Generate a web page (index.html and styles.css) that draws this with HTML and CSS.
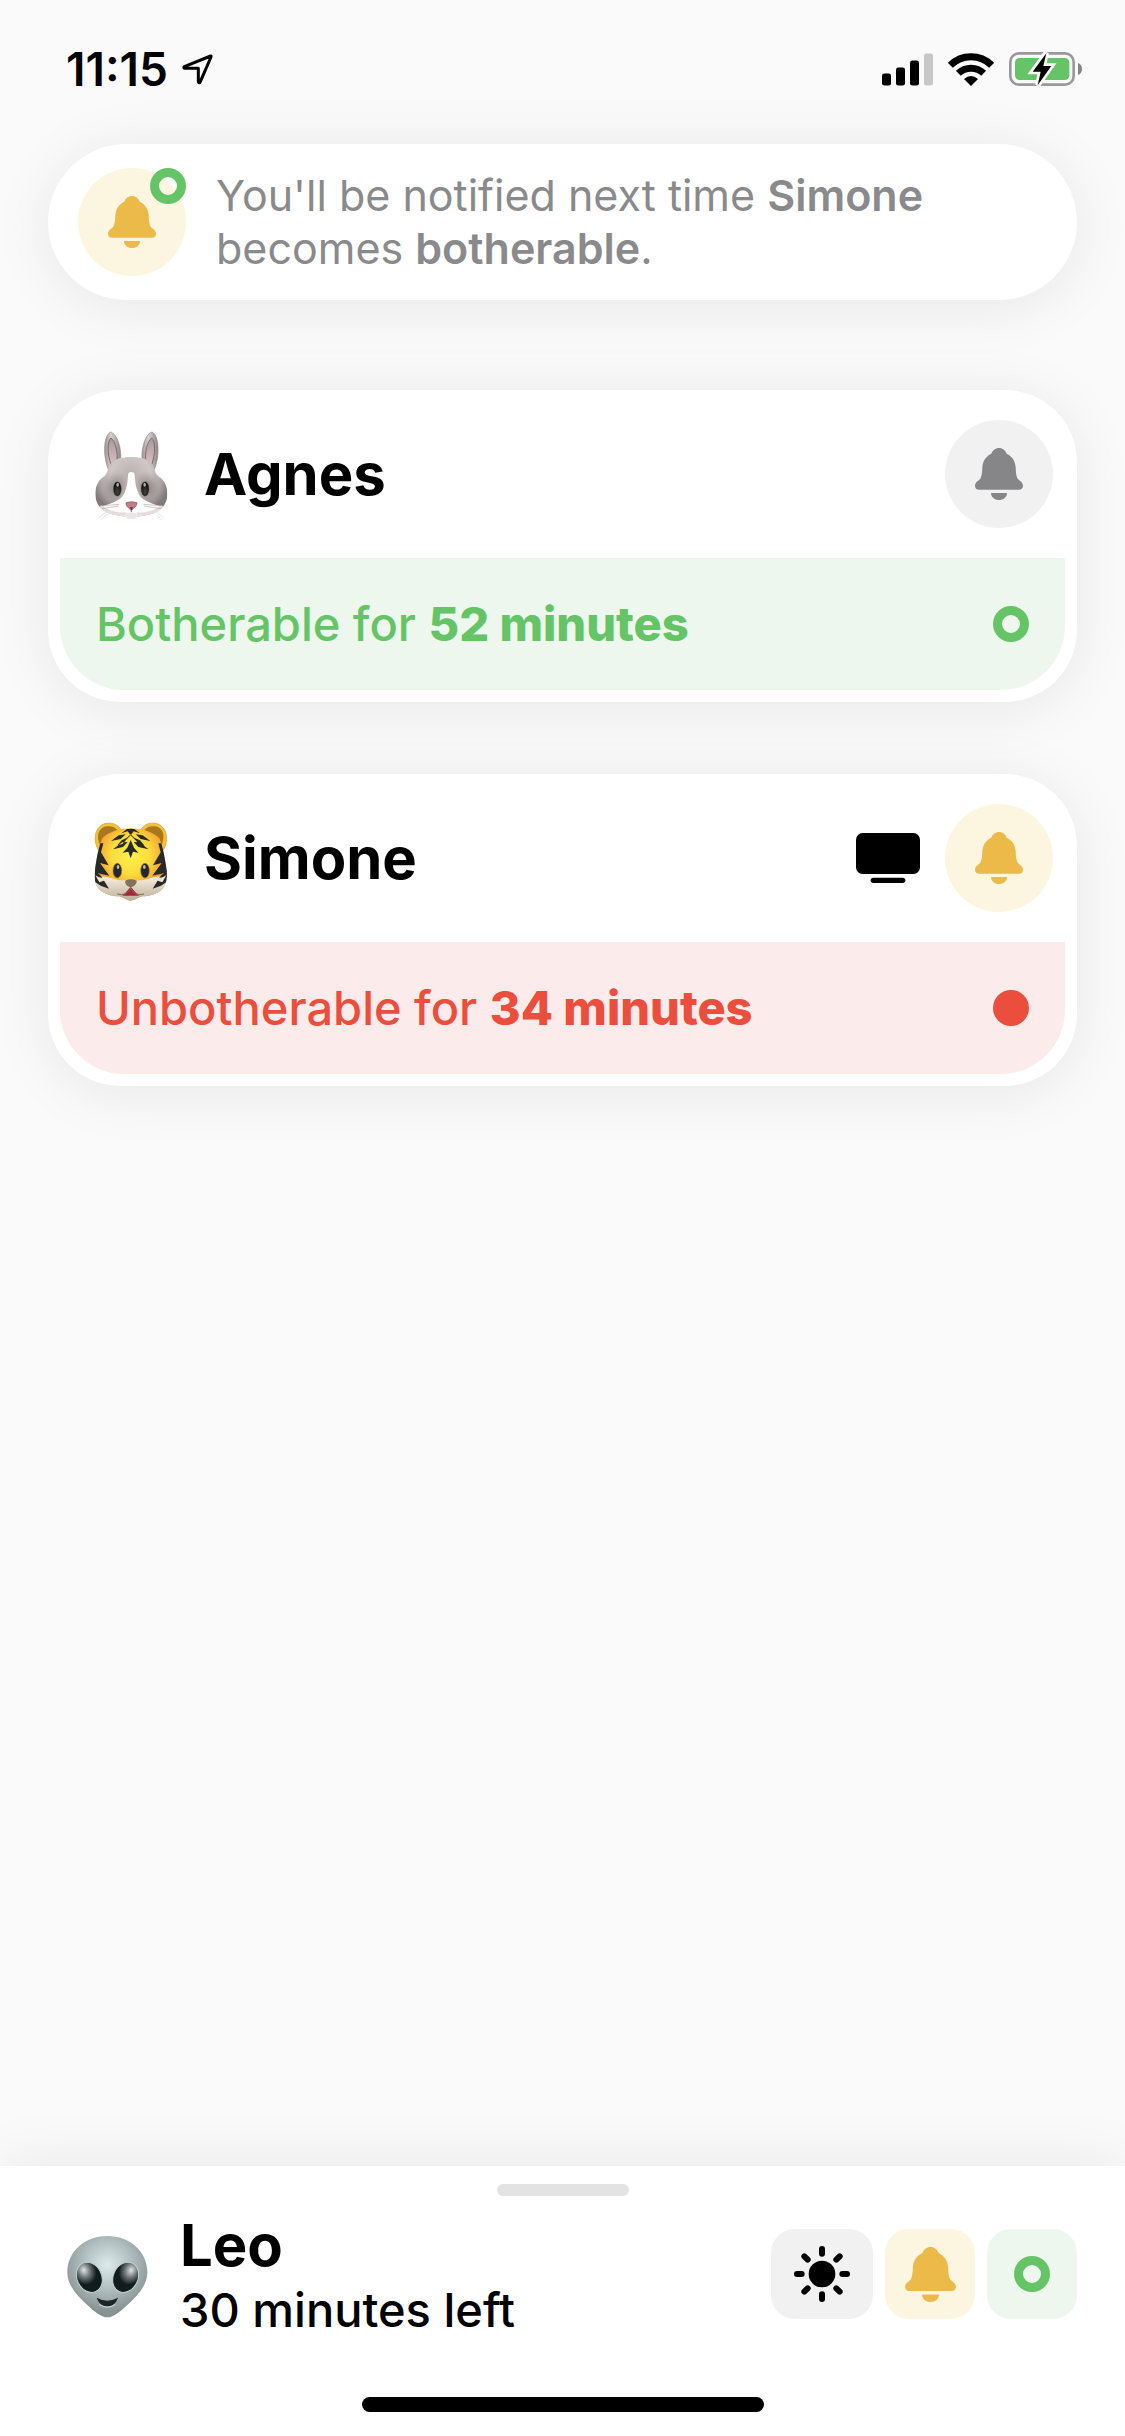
FILE: index.html
```html
<!DOCTYPE html>
<html lang="en">
<head>
<meta charset="utf-8">
<meta name="viewport" content="width=device-width, initial-scale=1">
<title>Botherable</title>
<link rel="stylesheet" href="styles.css">
</head>
<body>
<svg class="defs" width="0" height="0" aria-hidden="true">
  <symbol id="bell" viewBox="0 0 144 156">
    <path d="M72 0C83 0 91 7 95 17C112 25 121 40 122 58C123 75 123 82 128 92C134 98 144 103 144 113C144 121 139 125 132 125H12C5 125 0 121 0 113C0 103 10 98 16 92C21 82 21 75 22 58C23 40 32 25 49 17C53 7 61 0 72 0Z"/>
    <path d="M48 135H96C96 148 85 156 72 156S48 148 48 135Z"/>
  </symbol>
</svg>

<div class="screen">
  <header class="status-bar">
    <div class="status-left">
      <span class="time">11:15</span>
      <svg class="location" viewBox="429 69 93 93" width="31" height="31" aria-hidden="true"><path d="M515 75L436 107Q433 110 437 112L478 112L478 153Q480 157 483 154L516 78Q517 74 515 75Z" fill="none" stroke="#000" stroke-width="9" stroke-linejoin="round"/></svg>
    </div>
    <div class="status-right">
      <svg viewBox="66 68 153 98" width="51" height="33" aria-hidden="true">
        <rect x="66" y="129" width="27" height="36" rx="7"/>
        <rect x="108" y="111" width="27" height="54" rx="7"/>
        <rect x="150" y="90" width="27" height="75" rx="7"/>
        <rect x="192" y="69" width="27" height="96" rx="7" fill="#c7c7c7"/>
      </svg>
      <svg viewBox="264 66 138 99" width="46" height="33" aria-hidden="true">
        <path d="M271 103A88 88 0 0 1 395 103" fill="none" stroke="#000" stroke-width="21"/>
        <path d="M295 127A55 55 0 0 1 371 127" fill="none" stroke="#000" stroke-width="21"/>
        <path d="M333 165L312 144Q333 126 354 144Z"/>
      </svg>
      <svg viewBox="447 66 219 102" width="73" height="34" aria-hidden="true">
        <rect x="451" y="70" width="190" height="94" rx="26" fill="none" stroke="#999" stroke-width="8"/>
        <path d="M654 99Q666 104 666 117T654 135Z" fill="#858585"/>
        <rect x="465" y="84" width="163" height="66" rx="14" fill="#65c466"/>
        <path d="M559 68L518 125H542L533 166L574 108H550Z" stroke="#fafafa" stroke-width="16" fill="#fafafa"/>
        <path d="M559 70L518 125H542L533 166L574 108H550Z"/>
      </svg>
    </div>
  </header>

  <main class="content">
    <section class="toast" role="status">
      <div class="round-icon yellow">
        <svg class="bell" aria-hidden="true"><use href="#bell"/></svg>
        <span class="ring badge"></span>
      </div>
      <p class="toast-text">You'll be notified next time <b>Simone</b> becomes <b>botherable</b>.</p>
    </section>

    <article class="card">
      <div class="card-head">
        <svg class="avatar" viewBox="162 141 222 282" role="img" aria-label="Rabbit">
          <defs>
            <radialGradient id="fur" gradientUnits="userSpaceOnUse" cx="272" cy="285" r="120">
              <stop offset="0" stop-color="#b9afaf"/><stop offset=".5" stop-color="#d0c8c7"/><stop offset=".8" stop-color="#aaa2a2"/><stop offset="1" stop-color="#817979"/>
            </radialGradient>
            <radialGradient id="furshade"><stop offset="0" stop-color="#716868" stop-opacity=".8"/><stop offset="1" stop-color="#8a8181" stop-opacity="0"/></radialGradient>
            <linearGradient id="ear" x2="1"><stop offset="0" stop-color="#9b9392"/><stop offset=".4" stop-color="#d8d1ce"/><stop offset="1" stop-color="#8e8585"/></linearGradient>
            <linearGradient id="earin" x2="0" y2="1"><stop offset="0" stop-color="#a8999a"/><stop offset="1" stop-color="#dcbdc4"/></linearGradient>
            <radialGradient id="eye" cx=".5" cy=".7" r=".6"><stop offset="0" stop-color="#444"/><stop offset="1" stop-color="#0b0b0b"/></radialGradient>
            <clipPath id="rabbit-head"><path d="M205 260C216 238 244 231 274 231S331 238 342 260C344 278 350 285 362 294C376 305 382 323 382 342C382 377 356 400 325 404C306 407 294 411 274 412C254 411 242 407 223 404C192 400 166 377 166 342C166 323 172 305 186 294C198 285 203 278 205 260Z"/></clipPath>
          </defs>
          <path d="M205 268C190 235 188 170 211 156C231 160 247 205 241 249Z" fill="url(#ear)" stroke="#958c8b" stroke-width="2"/>
          <path d="M343 268C358 235 360 170 337 156C317 160 301 205 307 249Z" fill="url(#ear)" stroke="#958c8b" stroke-width="2"/>
          <path d="M213 254C201 220 202 182 213 174C226 182 235 220 230 247Z" fill="url(#earin)" stroke="#756b6c" stroke-width="3"/>
          <path d="M335 254C347 220 346 182 335 174C322 182 313 220 318 247Z" fill="url(#earin)" stroke="#756b6c" stroke-width="3"/>
          <g clip-path="url(#rabbit-head)">
            <rect x="160" y="225" width="230" height="190" fill="url(#fur)"/>
            <ellipse cx="228" cy="322" rx="42" ry="50" fill="url(#furshade)"/>
            <ellipse cx="320" cy="322" rx="42" ry="50" fill="url(#furshade)"/>
            <path d="M264 286Q264 276 274 276T284 286C285 320 294 348 310 358C335 374 360 378 378 382V415H170V382C188 378 213 374 238 358C254 348 263 320 264 286Z" fill="#fff"/>
            <path d="M180 378Q215 406 258 402M368 378Q333 406 290 402" stroke="#dccdcf" stroke-width="10" fill="none" opacity=".7"/>
            <path d="M190 377L238 373M185 386L236 378M359 377L310 373M364 386L312 378" stroke="#b6a8a9" stroke-width="2"/>
          </g>
          <path d="M198 396L176 414M204 400L182 420M350 396L371 414M344 400L366 420" stroke="#ddd8d8" stroke-width="2"/>
          <ellipse cx="232" cy="327" rx="12" ry="22" fill="url(#eye)" stroke="#776e6e"/>
          <ellipse cx="315" cy="327" rx="12" ry="22" fill="url(#eye)" stroke="#776e6e"/>
          <ellipse cx="233" cy="314" rx="4" ry="6" fill="#aaa"/><ellipse cx="314" cy="314" rx="4" ry="6" fill="#aaa"/>
          <path d="M274 384V397" stroke="#8d6b70" stroke-width="3"/>
          <path d="M258 368Q274 362 291 368C292 378 281 384 274 392C267 384 256 378 258 368Z" fill="#bd7e8a" stroke="#8b5862" stroke-width="2"/>
          <path d="M269 382L274 391L279 382Z" fill="#712a37"/>
          <rect x="258" y="398" width="32" height="18" rx="8" fill="#e8e6e6"/>
        </svg>
        <h2 class="name">Agnes</h2>
        <button class="round-icon gray" type="button" aria-label="Notify me about Agnes"><svg class="bell" aria-hidden="true"><use href="#bell"/></svg></button>
      </div>
      <div class="card-status free">
        <p class="status-text">Botherable for <b>52 minutes</b></p>
        <span class="ring"></span>
      </div>
    </article>

    <article class="card">
      <div class="card-head">
        <svg class="avatar" viewBox="162 123 222 282" role="img" aria-label="Tiger">
          <defs>
            <radialGradient id="tfur" gradientUnits="userSpaceOnUse" cx="272" cy="255" r="115">
              <stop offset="0" stop-color="#fff04a"/><stop offset=".5" stop-color="#fbdc3c"/><stop offset=".8" stop-color="#f6ae35"/><stop offset="1" stop-color="#dd9130"/>
            </radialGradient>
            <linearGradient id="cream" x2="0" y2="1"><stop offset="0" stop-color="#f7efdc"/><stop offset="1" stop-color="#b9ac98"/></linearGradient>
            <clipPath id="tiger-head"><path d="M187 204C211 184 240 175 272 175S334 184 358 204C368 227 374 262 380 300C382 325 379 346 365 359C351 371 332 378 306 379C295 382 283 392 272 392C261 392 249 382 238 379C212 378 193 371 179 359C165 346 162 325 165 300C170 262 177 227 187 204Z"/></clipPath>
          </defs>
          <path d="M175 240C158 210 163 168 198 160C221 157 236 166 243 180Z" fill="#f3c236" stroke="#c89a35" stroke-width="2"/>
          <path d="M370 240C387 210 382 168 347 160C324 157 309 166 302 180Z" fill="#f3c236" stroke="#c89a35" stroke-width="2"/>
          <path d="M182 228C166 200 176 170 202 169C218 168 228 174 235 184Z" fill="#a9771d"/>
          <path d="M363 228C379 200 369 170 343 169C327 168 317 174 310 184Z" fill="#a9771d"/>
          <g clip-path="url(#tiger-head)">
            <rect x="160" y="170" width="225" height="225" fill="url(#tfur)"/>
            <path d="M160 322C195 314 217 327 240 331Q272 332 305 331C328 327 350 314 385 322V395H160Z" fill="url(#cream)"/>
            <path d="M190 220L183 247L206 286L180 279L208 317L181 311L165 306L160 220ZM355 220L362 247L339 286L365 279L337 317L364 311L380 306L385 220ZM164 300L185 320L207 356L182 347L164 335ZM381 300L360 320L338 356L363 347L381 335Z" fill="#28292b"/>
            <path d="M166 316L177 322L207 327L178 337ZM379 316L368 322L338 327L367 337Z" fill="#eee3cd"/>
          </g>
          <path d="M272 176L283 177L300 190L281 184L272 196L263 184L244 190L261 177ZM272 196L283 207L297 222L314 227L300 211L283 203L272 193L261 203L245 211L232 226L247 222L261 207ZM213 213L236 196L257 193L242 207ZM331 213L308 196L287 193L302 207ZM219 238L247 217L263 216L249 231ZM326 238L297 217L281 216L295 231ZM272 210L282 233L295 248L279 245L272 265L265 245L248 248L262 233Z" fill="#282a24"/>
          <ellipse cx="232" cy="302" rx="13" ry="22" fill="#252829" stroke="#a57524" stroke-width="2"/>
          <ellipse cx="315" cy="302" rx="13" ry="22" fill="#252829" stroke="#a57524" stroke-width="2"/>
          <ellipse cx="234" cy="291" rx="4" ry="6" fill="#bbb"/><ellipse cx="313" cy="291" rx="4" ry="6" fill="#bbb"/>
          <path d="M247 377Q260 365 272 350Q284 365 297 377Z" fill="#a9253b"/>
          <path d="M272 348V357M272 356Q257 380 232 372M272 356Q287 380 312 372" stroke="#7d6c55" stroke-width="3" fill="none"/>
          <path d="M256 332Q272 324 290 332C291 343 280 350 272 352C264 350 253 343 256 332Z" fill="#81725b"/>
        </svg>
        <h2 class="name">Simone</h2>
        <svg class="tv" viewBox="108 189 192 150" width="64" height="50" role="img" aria-label="Watching TV"><rect x="108" y="189" width="192" height="123" rx="20"/><rect x="152" y="323" width="104" height="16" rx="8"/></svg>
        <button class="round-icon yellow" type="button" aria-label="Stop notifying me about Simone"><svg class="bell" aria-hidden="true"><use href="#bell"/></svg></button>
      </div>
      <div class="card-status busy">
        <p class="status-text">Unbotherable for <b>34 minutes</b></p>
        <span class="dot"></span>
      </div>
    </article>
  </main>

  <footer class="sheet">
    <div class="handle"></div>
    <div class="sheet-row">
      <svg class="avatar-me" viewBox="81 240 243 264" role="img" aria-label="Alien">
        <defs>
          <radialGradient id="skin" gradientUnits="userSpaceOnUse" cx="202" cy="345" r="140">
            <stop offset="0" stop-color="#dcebec"/><stop offset=".45" stop-color="#b7c5c6"/><stop offset="1" stop-color="#879293"/>
          </radialGradient>
          <radialGradient id="gloss" cx=".42" cy=".22" r=".48"><stop offset="0" stop-color="#e4e4e4"/><stop offset=".5" stop-color="#70777a"/><stop offset="1" stop-color="#111c1e"/></radialGradient>
          <radialGradient id="gloss2" cx=".58" cy=".22" r=".48"><stop offset="0" stop-color="#e4e4e4"/><stop offset=".5" stop-color="#70777a"/><stop offset="1" stop-color="#111c1e"/></radialGradient>
        </defs>
        <path d="M202 258C270 258 322 305 322 367C322 407 291 439 263 464C242 483 221 502 202 502S162 483 141 464C113 439 82 407 82 367C82 305 134 258 202 258Z" fill="url(#skin)"/>
        <ellipse cx="148" cy="382" rx="37" ry="47" transform="rotate(-25 148 382)" fill="url(#gloss)" stroke="#c4d2d3" stroke-width="3"/>
        <ellipse cx="257" cy="382" rx="37" ry="47" transform="rotate(25 257 382)" fill="url(#gloss2)" stroke="#c4d2d3" stroke-width="3"/>
        <path d="M170 443Q202 461 234 443C228 460 217 469 202 469S176 460 170 443Z" fill="#1b2526"/>
        <path d="M178 463Q202 480 226 463" fill="none" stroke="#cfdedf" stroke-width="3"/>
      </svg>
      <div class="me">
        <h2 class="name">Leo</h2>
        <p class="time-left">30 minutes left</p>
      </div>
      <div class="actions">
        <button class="action wide gray" type="button" aria-label="Activity">
          <svg viewBox="162 288 168 168" width="56" height="56" aria-hidden="true">
            <circle cx="246" cy="372" r="40"/>
            <g stroke="#000" stroke-width="18" stroke-linecap="round"><path d="M246 297V311M246 433V447M171 372H185M307 372H321M193 319L203 329M289 415L299 425M299 319L289 329M203 415L193 425"/></g>
          </svg>
        </button>
        <button class="action yellow" type="button" aria-label="Notifications"><svg class="bell-large" aria-hidden="true"><use href="#bell"/></svg></button>
        <button class="action green" type="button" aria-label="Botherable"><span class="ring"></span></button>
      </div>
    </div>
    <div class="home-indicator"></div>
  </footer>
</div>
</body>
</html>
```
FILE: styles.css
```css
* {
  box-sizing: border-box;
}

body {
  margin: 0;
  background: #fafafa;
  color: #000;
  font-family: Inter, "Liberation Sans", sans-serif;
  font-optical-sizing: none;
}

h2,
p {
  margin: 0;
}

svg {
  display: block;
  flex: none;
}

button {
  border: 0;
  padding: 0;
  font: inherit;
  color: inherit;
}

.defs {
  position: absolute;
}

.screen {
  display: flex;
  flex-direction: column;
  min-height: 100vh;
}

/* Status bar */
.status-bar {
  display: flex;
  align-items: center;
  justify-content: space-between;
  height: 138px;
  padding: 0 43px 0 66px;
}

.status-left {
  display: flex;
  align-items: center;
  gap: 14px;
}

.status-right {
  display: flex;
  align-items: center;
  gap: 15px;
}

.time {
  font-size: 46px;
  font-weight: 600;
}

/* Content */
.content {
  display: flex;
  flex: 1;
  flex-direction: column;
  gap: 72px;
  padding: 6px 48px 72px;
}

.toast,
.card {
  background: #fff;
  box-shadow: 0 6px 60px rgba(0, 0, 0, 0.08);
}

.toast {
  display: flex;
  align-items: center;
  gap: 30px;
  margin-bottom: 18px;
  padding: 24px 30px;
  border-radius: 78px;
}

.toast-text {
  flex: 1;
  max-width: 740px;
  color: #8a8a8c;
  font-size: 43px;
  line-height: 53px;
}

.toast-text b {
  font-weight: 600;
}

.round-icon {
  position: relative;
  display: flex;
  flex: none;
  align-items: center;
  justify-content: center;
  width: 108px;
  height: 108px;
  border-radius: 50%;
}

.yellow {
  background: #fcf5e0;
  fill: #ecba48;
}

.gray {
  background: #f1f1f1;
}

.round-icon.gray {
  fill: #868688;
}

.green {
  background: #edf7ee;
}

.bell {
  width: 48px;
  height: 52px;
}

.ring,
.dot {
  flex: none;
  width: 36px;
  height: 36px;
  border-radius: 50%;
}

.ring {
  border: 9px solid #65c466;
}

.dot {
  background: #eb4e3d;
}

.badge {
  position: absolute;
  top: 0;
  right: 0;
}

.card {
  padding: 0 12px 12px;
  border-radius: 72px;
}

.card-head {
  display: flex;
  align-items: center;
  height: 168px;
  padding: 0 12px 0 34px;
}

.avatar {
  width: 74px;
  height: 94px;
  margin-right: 36px;
}

.name {
  font-size: 58px;
  font-weight: 700;
  line-height: 72px;
}

.card-head .name {
  flex: 1;
}

.tv {
  margin-right: 25px;
}

.card-status {
  display: flex;
  align-items: center;
  justify-content: space-between;
  height: 132px;
  padding: 0 36px;
  border-radius: 0 0 64px 64px;
}

.free {
  background: #edf7ee;
  color: #65c466;
}

.busy {
  background: #fcebeb;
  color: #eb4e3d;
}

.status-text,
.time-left {
  font-size: 47px;
  font-weight: 500;
  line-height: 58px;
}

.status-text b {
  font-weight: 800;
}

/* Bottom sheet */
.sheet {
  padding: 18px 48px 24px;
  background: #fff;
  box-shadow: 0 0 60px rgba(0, 0, 0, 0.08);
}

.handle {
  width: 132px;
  height: 12px;
  margin: 0 auto 13px;
  border-radius: 6px;
  background: #e3e3e3;
}

.sheet-row {
  display: flex;
  align-items: center;
  padding-left: 19px;
}

.avatar-me {
  width: 81px;
  height: 88px;
  margin-right: 32px;
}

.me {
  flex: 1;
}

.actions {
  display: flex;
  gap: 12px;
}

.action {
  display: flex;
  align-items: center;
  justify-content: center;
  width: 90px;
  height: 90px;
  border-radius: 24px;
}

.action.wide {
  width: 102px;
}

.bell-large {
  width: 51px;
  height: 55px;
}

.home-indicator {
  width: 402px;
  height: 15px;
  margin: 58px auto 0;
  border-radius: 8px;
  background: #000;
}
```
